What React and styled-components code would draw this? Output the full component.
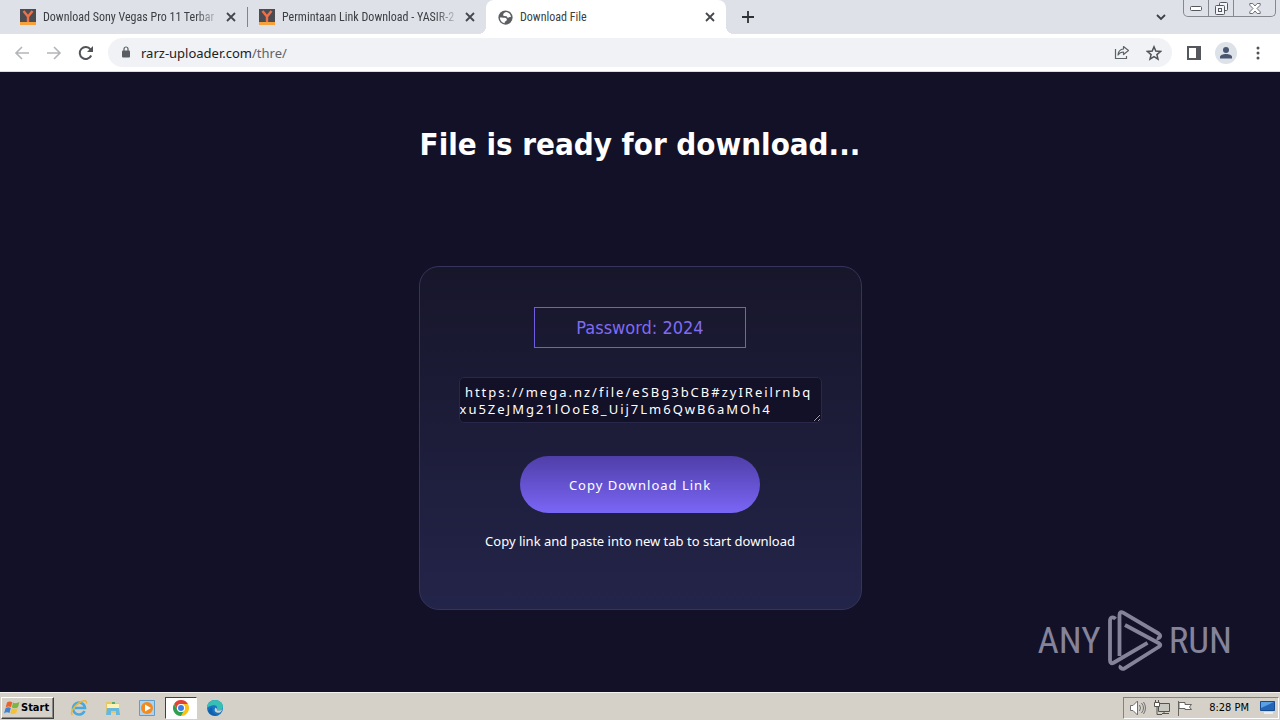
import React from "react";
import styled, { createGlobalStyle, css } from "styled-components";

const uiFont = '"Noto Sans", "Open Sans", sans-serif';
const wideFont = '"DejaVu Sans Condensed", "DejaVu Sans", sans-serif';
const narrowFont = '"Roboto Condensed", Roboto, sans-serif';

const GlobalStyle = createGlobalStyle`
  *, *::before, *::after { box-sizing: border-box; }
  body { margin: 0; font-family: ${wideFont}; font-size: 12px; }
  h1, p { margin: 0; }
  button { font: inherit; color: inherit; border: 0; padding: 0; background: none; }
  svg { display: block; flex: none; }
`;

const Screen = styled.div`
  display: flex;
  flex-direction: column;
  min-height: 100vh;
`;

/* ---------- browser frame ---------- */
const TabStrip = styled.header`
  display: flex;
  height: 34px;
  padding-left: 8px;
  background: #dee1e8;
`;

const Tab = styled.div`
  position: relative;
  display: flex;
  align-items: center;
  flex: 0 1 ${(p) => (p.$active ? 240 : 239)}px;
  min-width: 0;
  height: 34px;
  padding: 0 8px 0 12px;
  gap: 7px;
  color: #3c4043;
  ${(p) =>
    p.$active &&
    css`
      background: #fff;
      border-radius: 8px 8px 0 0;
      &::before,
      &::after {
        content: "";
        position: absolute;
        bottom: 0;
        width: 8px;
        height: 8px;
      }
      &::before {
        left: -8px;
        background: radial-gradient(circle at 0 0, transparent 8px, #fff 8px);
      }
      &::after {
        right: -8px;
        background: radial-gradient(circle at 100% 0, transparent 8px, #fff 8px);
      }
    `}
`;

const TabDivider = styled.span`
  align-self: center;
  flex: none;
  width: 1px;
  height: 20px;
  margin-right: -1px;
  background: #80848c;
`;

const TabTitle = styled.span`
  flex: 1;
  min-width: 0;
  overflow: hidden;
  white-space: nowrap;
  font: 12px/20px ${narrowFont};
  ${(p) => p.$fade && "mask-image: linear-gradient(90deg, #000 88%, transparent 103%);"}
`;

const IconButton = styled.button`
  display: flex;
  align-items: center;
  justify-content: center;
  flex: none;
  width: ${(p) => p.$size || 28}px;
  height: ${(p) => p.$size || 28}px;
  border-radius: 50%;
  background: ${(p) => p.$fill || "none"};
`;

const NewTab = styled(IconButton)`
  align-self: center;
  margin-left: 8px;
`;

const StripEnd = styled.div`
  display: flex;
  align-items: flex-start;
  gap: 8px;
  margin-left: auto;
  padding-right: 4px;
`;

const TabSearch = styled(IconButton)`
  align-self: center;
`;

const WindowButtons = styled.div`
  display: flex;
  height: 17px;
  border: 1px solid #85898f;
  border-top: 0;
  border-radius: 0 0 5px 5px;
`;

const WindowButton = styled.button`
  display: flex;
  align-items: center;
  justify-content: center;
  width: ${(p) => p.$width}px;
  & + & { border-left: 1px solid #85898f; }
`;

const Toolbar = styled.nav`
  display: flex;
  align-items: center;
  gap: 4px;
  height: 38px;
  padding: 0 8px;
  background: #fff;
  border-bottom: 1px solid #dadce0;
`;

const Omnibox = styled.div`
  display: flex;
  align-items: center;
  flex: 1;
  min-width: 0;
  height: 29px;
  margin: 0 4px;
  padding: 0 4px 0 13px;
  gap: 4px;
  border-radius: 15px;
  background: #f0f2f5;
`;

const Address = styled.a`
  flex: 1;
  margin-left: 6px;
  color: #202124;
  text-decoration: none;
  font: 13px/20px ${uiFont};
  span { color: #5f6368; }
`;

/* ---------- page ---------- */
const Page = styled.main`
  position: relative;
  display: flex;
  flex: 1;
  flex-direction: column;
  align-items: center;
  padding: 52px 20px 82px;
  background: #121128;
  color: #fff;
`;

const Heading = styled.h1`
  font: bold 31px/40px ${wideFont};
  text-align: center;
`;

const Card = styled.section`
  display: flex;
  flex-direction: column;
  align-items: center;
  width: 100%;
  max-width: 443px;
  height: 344px;
  margin-top: 102px;
  padding: 40px 39px;
  border: 1px solid #35345a;
  border-radius: 20px;
  background: linear-gradient(#17162b, #232449);
`;

const Password = styled.div`
  width: 212px;
  padding: 10px 0 9px;
  border: 1px solid #6f5ce0;
  color: #7f6bf2;
  font: 18px/20px ${wideFont};
  text-align: center;
`;

const LinkBox = styled.textarea`
  width: 363px;
  max-width: 100%;
  height: 46px;
  margin-top: 29px;
  padding: 6px 0 0;
  border: 1px solid #29284a;
  border-radius: 5px;
  outline: 0;
  overflow: hidden;
  background: #121128;
  color: #fff;
  font: 13px/17px ${uiFont};
  letter-spacing: 2px;
  word-break: break-all;
`;

const CopyButton = styled.button`
  && {
    width: 240px;
    height: 57px;
    margin-top: 33px;
    border-radius: 29px;
    background: linear-gradient(#4f3ea8, #7a66f6);
    color: #fff;
    font: 13px/20px ${uiFont};
    letter-spacing: 1px;
  }
`;

const Hint = styled.p`
  margin-top: 18px;
  font: 13px/20px ${uiFont};
  white-space: nowrap;
`;

const Watermark = styled.div`
  position: absolute;
  right: 48px;
  bottom: 20px;
  display: flex;
  align-items: center;
  gap: 6px;
  color: #85839a;
  font: 37px/62px ${narrowFont};
`;

/* ---------- taskbar ---------- */
const Taskbar = styled.footer`
  display: flex;
  align-items: center;
  height: 28px;
  padding: 2px 1px 0;
  background: #d5d1c9;
  border-top: 1px solid #f4f2ee;
`;

const StartButton = styled.button`
  && {
    display: flex;
    align-items: center;
    width: 53px;
    height: 22px;
    padding-left: 2px;
    border: 1px solid;
    border-color: #fff #404040 #404040 #fff;
    box-shadow: inset -1px -1px #888;
    color: #000;
    font: bold 11px/16px ${wideFont};
  }
`;

const QuickLaunch = styled.div`
  display: flex;
  gap: 2px;
  margin-left: 9px;
`;

const TaskButton = styled.button`
  && {
    display: flex;
    align-items: center;
    justify-content: center;
    width: 32px;
    height: 22px;
    ${(p) =>
      p.$active &&
      css`
        background: #fff;
        border: 1px solid;
        border-color: #404040 #fff #fff #404040;
      `}
  }
`;

const Tray = styled.div`
  display: flex;
  align-items: center;
  gap: 7px;
  height: 22px;
  margin-left: auto;
  padding: 0 3px 0 5px;
  border: 1px solid;
  border-color: #85827b #fff #fff #85827b;
  color: #000;
`;

const Clock = styled.time`
  margin: 0 4px 0 9px;
  font: 11px/16px ${wideFont};
`;

/* ---------- icons ---------- */
const YIcon = () => (
  <svg width="16" height="16" viewBox="0 0 16 16">
    <path fill="#4b4c52" d="M0 0h16v13H0z" />
    <path fill="#f7a13c" d="M0 13h16v3H0z" />
    <path fill="none" stroke="#ee7048" strokeWidth="2.4" d="M3.5 2 8 7.5 12.5 2M8 7v6" />
  </svg>
);

const GlobeIcon = () => (
  <svg width="15" height="15" viewBox="0 0 16 16">
    <circle cx="8" cy="8" r="7.6" fill="#5b5e63" />
    <path fill="#fff" d="M8.500 2c-1.600.7-2.800 1.500-3 2.700-.1 1 .4 1.600 1.500 1.700l2 .2c.8.100.6 1.400 1.500 1.600 1.100.2 1.500-.9 3.300-.7C13.500 4.500 11.500 2.300 8.500 2ZM2 8c0 3 2 5.500 5 6l.3-1.600c1.500-.5 2.300-1.300 2.100-2.500-.2-1.500-1.800-1.400-3.300-1.600C4.700 8.100 4 8 2 8Z" />
  </svg>
);

const CloseIcon = () => (
  <svg width="10" height="10" viewBox="0 0 10 10" fill="none" stroke="#44474c" strokeWidth="1.8">
    <path d="m1 1 8 8M9 1 1 9" />
  </svg>
);

const PlusIcon = () => (
  <svg width="12" height="12" viewBox="0 0 12 12" stroke="#303134" strokeWidth="1.8">
    <path d="M6 0v12M0 6h12" />
  </svg>
);

const ChevronIcon = () => (
  <svg width="10" height="7" viewBox="0 0 10 7" fill="none" stroke="#3c4043" strokeWidth="1.8">
    <path d="m1 1 4 4 4-4" />
  </svg>
);

const MinimizeIcon = () => (
  <svg width="12" height="5" viewBox="0 0 12 5">
    <rect x=".5" y=".5" width="11" height="4" rx="1" fill="#fff" stroke="#55585e" />
  </svg>
);

const RestoreIcon = () => (
  <svg width="13" height="13" viewBox="0 0 13 13" fill="#f4f5f8" stroke="#55585e">
    <rect x="4.5" y=".5" width="8" height="8" rx="1" />
    <rect x=".5" y="3.5" width="9" height="9" rx="1" />
    <rect x="3.5" y="6.5" width="3" height="3" />
  </svg>
);

const WindowCloseIcon = () => (
  <svg width="12" height="11" viewBox="0 0 12 11" fill="#fff" stroke="#6b6f76" strokeLinejoin="round">
    <path d="M.8.5h3L6 3 8.200.5h3v1.700L8 5.500l3.200 3.300v1.700h-3L6 8l-2.200 2.500h-3V8.800L4 5.500.8 2.200Z" />
  </svg>
);

const ArrowIcon = ({ forward }) => (
  <svg width="16" height="14" viewBox="0 0 16 14" fill="none" stroke="#b3b5b8" strokeWidth="1.6">
    <path d={forward ? "M1 7h13M8 1l6 6-6 6" : "M15 7H2M8 1 2 7l6 6"} />
  </svg>
);

const ReloadIcon = () => (
  <svg width="16" height="16" viewBox="0 0 16 16">
    <path d="M13.200 10.500a6 6 0 1 1-.7-6.200" fill="none" stroke="#505357" strokeWidth="2" />
    <path d="M15 1v6H9Z" fill="#505357" />
  </svg>
);

const LockIcon = () => (
  <svg width="10" height="13" viewBox="0 0 10 13">
    <rect x="1" y="4.5" width="8" height="7" rx="1" fill="#5a5d62" />
    <path d="M3 5V3a2 2 0 0 1 4 0v2" fill="none" stroke="#5a5d62" strokeWidth="1.2" />
  </svg>
);

const ShareIcon = () => (
  <svg width="16" height="15" viewBox="0 0 16 15" fill="none" stroke="#5f6368" strokeWidth="1.2">
    <path d="M1.500 4v9.500h11V11" />
    <path d="M9.500 1.500 14.500 5.500l-5 4V7C7 7 5.300 8 4 10c.3-3.500 2-5.700 5.500-6Z" strokeLinejoin="round" />
  </svg>
);

const StarIcon = () => (
  <svg width="16" height="16" viewBox="0 0 16 16" fill="none" stroke="#505459" strokeWidth="1.5">
    <path d="m8 1.800 1.800 4.300 4.700.4-3.600 3.100 1.100 4.600L8 11.700l-4 2.500 1.100-4.600L1.500 6.500l4.700-.4Z" />
  </svg>
);

const SidePanelIcon = () => (
  <svg width="14" height="14" viewBox="0 0 14 14">
    <rect x="1" y="1" width="12" height="12" fill="none" stroke="#54575c" strokeWidth="2" />
    <path d="M9 1h4v12H9z" fill="#54575c" />
  </svg>
);

const PersonIcon = () => (
  <svg width="14" height="14" viewBox="0 0 14 14" fill="#4a5670">
    <circle cx="7" cy="4" r="3" />
    <path d="M1 12.500V11c0-2 3-3 6-3s6 1 6 3v1.500Z" />
  </svg>
);

const MenuIcon = () => (
  <svg width="4" height="14" viewBox="0 0 4 14" fill="#505357">
    <circle cx="2" cy="2" r="1.5" />
    <circle cx="2" cy="7" r="1.5" />
    <circle cx="2" cy="12" r="1.5" />
  </svg>
);

const PlayMark = () => (
  <svg width="56" height="62" viewBox="0 0 56 62" fill="none" stroke="#85839a" strokeWidth="3.8" strokeLinejoin="round">
    <path d="M8.500 9C6 6 3 7.500 3 11v39c0 3.500 1.500 4 4 2.500L40.500 32.800" />
    <path d="M12.500 46V5c0-3 1.600-3.600 4-2.200L51.500 23.500c3 2 1.500 5.500-1.700 4.200" />
    <path d="M18 15 51.500 33c2.500 1.400 2.400 2.600 0 4L17.500 58.300c-2.600 1.600-5-.7-3.500-2.800" />
  </svg>
);

const WindowsIcon = () => (
  <svg width="17" height="16" viewBox="0 0 17 16">
    <path fill="#e8622c" d="M3 2.500C5 1 6.500 1.200 8.300 2.200L7 7.200C5.300 6.200 3.700 6.300 1.700 7.500Z" />
    <path fill="#7bb642" d="M9 2.500c2 1 4 .8 6.500-.5L14 7.200c-2.200 1.200-4 1.200-6.200.2Z" />
    <path fill="#3f83cf" d="M1.500 8.300c2-1.300 3.700-1.200 5.300-.3L5.500 13c-1.800-1-3.400-1-5.500.4Z" />
    <path fill="#f5c237" d="M7.600 8.300c2.200 1 4 1 6.200-.2L12.300 13c-2 1.400-4 1.400-6 .4Z" />
  </svg>
);

const ExplorerIcon = () => (
  <svg width="18" height="18" viewBox="0 0 18 18" fill="none">
    <path d="M14.500 12a6 6 0 1 1 .5-3H5" stroke="#48a9df" strokeWidth="2.6" />
    <path d="M2.500 16C-.5 14 4 7 9 4c4-2.500 8-3.500 7.500.5" stroke="#e9b838" strokeWidth="1.5" />
  </svg>
);

const FolderIcon = () => (
  <svg width="18" height="18" viewBox="0 0 18 18">
    <path fill="#e6c667" d="M2 3h5l1 1h7v10H2z" />
    <path fill="#fff2b4" d="M3 5h12v5H3z" />
    <path fill="#67b8dd" d="M3 9h12l1 7h-4v-4H7v4H2Z" />
    <path fill="#5bab6c" d="M8 3h3v2H8z" />
  </svg>
);

const MediaIcon = () => (
  <svg width="16" height="16" viewBox="0 0 16 16">
    <path fill="#aed3ee" stroke="#619dc8" d="M.5.500h15v15H.5z" />
    <circle cx="8" cy="8" r="6" fill="#f28a20" />
    <path fill="#fff" d="m6 4.500 6 3.500-6 3.500z" />
  </svg>
);

const ChromeIcon = () => (
  <svg width="16" height="16" viewBox="0 0 16 16">
    <path fill="#e34335" d="M1.070 4A8 8 0 0 1 14.930 4H8a4 4 0 0 0-3.460 6Z" />
    <path fill="#fbc116" d="M14.930 4A8 8 0 0 1 8 16l3.460-6A4 4 0 0 0 8 4Z" />
    <path fill="#2fa04d" d="M8 16A8 8 0 0 1 1.070 4l3.470 6a4 4 0 0 0 6.920 0Z" />
    <circle cx="8" cy="8" r="4" fill="#fff" />
    <circle cx="8" cy="8" r="3" fill="#3d7de8" />
  </svg>
);

const EdgeIcon = () => (
  <svg width="16" height="16" viewBox="0 0 16 16">
    <circle cx="8" cy="8" r="8" fill="#1674c2" />
    <path fill="#35bfb5" d="M0 8C0 3.500 3.500 0 8 0s8 3 8 6.500c0 2.500-2 4-4.500 4-1.500 0-2-.5-1.500-1.500C11 6 8 4.500 5 5.500 2.500 6.200.7 7.200 0 8Z" />
    <path fill="#d5d1c9" d="M10 9c-.5 1 0 1.500 1.500 1.500 1.600 0 3-.6 3.800-1.600-.8 3.400-3.300 4.400-5.600 3.600C7.500 11.700 7 9.700 8.500 7.500Z" />
    <path fill="#1260ad" d="M5.500 7.500c-1.500 4 1.500 7.500 6 7.400A8 8 0 0 1 1 11.500c.5-2 2-3.500 4.500-4Z" />
  </svg>
);

const SpeakerIcon = () => (
  <svg width="18" height="16" viewBox="0 0 18 16" fill="none" stroke="#707070">
    <path fill="#fff" d="M1.500 5.500H4L8.500 1v14L4 10.500H1.500Z" />
    <path d="M10.500 5q2 3 0 6M12.500 3q4 5 0 10M14.500 2q4 6 0 12" />
  </svg>
);

const NetworkIcon = () => (
  <svg width="16" height="16" viewBox="0 0 16 16" fill="#fff" stroke="#55544f">
    <path fill="#c9c7c2" d="M4.500 3.500h11v8h-11z" />
    <path d="M8 13.500h7M10 11.500v2M3 7v7.500h5" fill="none" />
    <path d="M.5 2.500h5v4h-5zM1.500 0v2M4.500 0v2" />
  </svg>
);

const FlagIcon = () => (
  <svg width="16" height="16" viewBox="0 0 16 16" fill="#fff" stroke="#666560">
    <path d="M1.500 1v15M2 2.500h6v2h6.500l-2 2.500 2 2.500H8v-1H2Z" />
  </svg>
);

const DesktopIcon = () => (
  <svg width="15" height="13" viewBox="0 0 15 13">
    <path fill="#2465b8" stroke="#174c91" d="M.5.500h14v9H.5z" />
    <path fill="#5aa0e4" d="M1 1h13L1 7z" />
    <path fill="#e7edf3" d="M4 11h9v2H4z" />
  </svg>
);

const tabs = [
  { title: "Download Sony Vegas Pro 11 Terbar", icon: <YIcon />, fade: true },
  { title: "Permintaan Link Download - YASIR-2", icon: <YIcon />, fade: true },
  { title: "Download File", icon: <GlobeIcon />, active: true },
];

const downloadLink = " https://mega.nz/file/eSBg3bCB#zyIReilrnbqxu5ZeJMg21lOoE8_Uij7Lm6QwB6aMOh4";

export default function App() {
  return (
    <Screen>
      <GlobalStyle />
      <TabStrip>
        {tabs.map((tab, i) => (
          <React.Fragment key={tab.title}>
            {i === 1 && <TabDivider />}
            <Tab $active={tab.active}>
              {tab.icon}
              <TabTitle $fade={tab.fade}>{tab.title}</TabTitle>
              <IconButton $size={16} aria-label="Close tab">
                <CloseIcon />
              </IconButton>
            </Tab>
          </React.Fragment>
        ))}
        <NewTab aria-label="New tab"><PlusIcon /></NewTab>
        <StripEnd>
          <TabSearch aria-label="Search tabs"><ChevronIcon /></TabSearch>
          <WindowButtons>
            <WindowButton $width={24} aria-label="Minimize"><MinimizeIcon /></WindowButton>
            <WindowButton $width={25} aria-label="Restore"><RestoreIcon /></WindowButton>
            <WindowButton $width={42} aria-label="Close"><WindowCloseIcon /></WindowButton>
          </WindowButtons>
        </StripEnd>
      </TabStrip>
      <Toolbar>
        <IconButton aria-label="Back"><ArrowIcon /></IconButton>
        <IconButton aria-label="Forward"><ArrowIcon forward /></IconButton>
        <IconButton aria-label="Reload"><ReloadIcon /></IconButton>
        <Omnibox>
          <LockIcon />
          <Address href="#">rarz-uploader.com<span>/thre/</span></Address>
          <IconButton aria-label="Share"><ShareIcon /></IconButton>
          <IconButton aria-label="Bookmark"><StarIcon /></IconButton>
        </Omnibox>
        <IconButton aria-label="Side panel"><SidePanelIcon /></IconButton>
        <IconButton aria-label="Profile">
          <IconButton as="span" $size={22} $fill="#dde1e8"><PersonIcon /></IconButton>
        </IconButton>
        <IconButton aria-label="Menu"><MenuIcon /></IconButton>
      </Toolbar>

      <Page>
        <Heading>File is ready for download...</Heading>
        <Card>
          <Password>Password: 2024</Password>
          <LinkBox aria-label="Download link" spellCheck={false} defaultValue={downloadLink} />
          <CopyButton>Copy Download Link</CopyButton>
          <Hint>Copy link and paste into new tab to start download</Hint>
        </Card>
        <Watermark>
          <span>ANY</span>
          <PlayMark />
          <span>RUN</span>
        </Watermark>
      </Page>

      <Taskbar>
        <StartButton><WindowsIcon />Start</StartButton>
        <QuickLaunch>
          <TaskButton aria-label="Internet Explorer"><ExplorerIcon /></TaskButton>
          <TaskButton aria-label="Files"><FolderIcon /></TaskButton>
          <TaskButton aria-label="Media Player"><MediaIcon /></TaskButton>
          <TaskButton aria-label="Chrome" $active><ChromeIcon /></TaskButton>
          <TaskButton aria-label="Edge"><EdgeIcon /></TaskButton>
        </QuickLaunch>
        <Tray>
          <SpeakerIcon />
          <NetworkIcon />
          <FlagIcon />
          <Clock>8:28 PM</Clock>
          <DesktopIcon />
        </Tray>
      </Taskbar>
    </Screen>
  );
}
